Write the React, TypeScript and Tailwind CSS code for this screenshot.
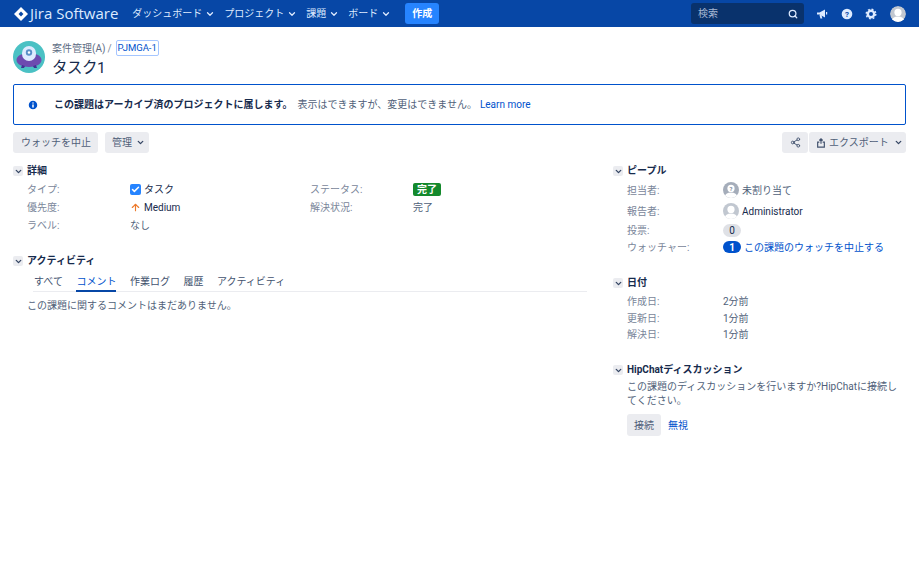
import { ChevronDown, Search, Share2, ArrowUp, Check, Info } from "lucide-react";
import type { ReactNode } from "react";

const navItems = ["ダッシュボード", "プロジェクト", "課題", "ボード"];
const tabs = ["すべて", "コメント", "作業ログ", "履歴", "アクティビティ"];

function Logo() {
  return (
    <svg viewBox="0 0 16 16" className="size-[14px] shrink-0">
      <path d="M8 0 L16 8 L8 16 L0 8 Z" fill="#fff" />
      <path d="M8 5.2 L10.8 8 L8 10.8 L5.2 8 Z" fill="#0747a6" />
    </svg>
  );
}

function ProjectAvatar() {
  return (
    <svg viewBox="0 0 32 32" className="size-[32px] shrink-0">
      <circle cx="16" cy="16" r="16" fill="#4bc1c4" />
      <path d="M3.5 19c0-4 5-7 12.5-7s12.5 3 12.5 7c0 4-5 7-12.5 7S3.5 23 3.5 19z" fill="#6d4bb0" />
      <path d="M9 24l-1 3h3l1-2zM23 24l1 3h-3l-1-2z" fill="#403294" />
      <rect x="9" y="5" width="14" height="15" rx="7" fill="#deebff" />
      <circle cx="16" cy="11.5" r="3.2" fill="#5a8fc8" />
      <circle cx="16" cy="11.5" r="1.2" fill="#fff" />
    </svg>
  );
}

function UserIcon({ unknown, id }: { unknown?: boolean; id: string }) {
  return (
    <svg viewBox="0 0 16 16" className="size-[16px] shrink-0">
      <defs>
        <clipPath id={id}>
          <circle cx="8" cy="8" r="8" />
        </clipPath>
      </defs>
      <g clipPath={`url(#${id})`}>
        <rect width="16" height="16" fill={unknown ? "#a5adba" : "#c1c7d0"} />
        <circle cx="8" cy="6.4" r="3.6" fill="#fff" />
        <ellipse cx="8" cy="15" rx="6.4" ry="4.6" fill="#fff" />
      </g>
      {unknown && (
        <text x="8" y="8.8" textAnchor="middle" fontSize="6" fontWeight="700" fill="#7a869a">
          ?
        </text>
      )}
    </svg>
  );
}

function SectionHead({ title }: { title: string }) {
  return (
    <div className="flex h-[14px] items-center gap-[4px]">
      <span className="flex h-[10px] w-[10px] items-center justify-center rounded-[2px] bg-[#ebecf0]">
        <ChevronDown className="size-[9px] text-[#344563]" strokeWidth={3.5} />
      </span>
      <h2 className="text-[10px] font-bold leading-[14px] text-[#172b4d]">{title}</h2>
    </div>
  );
}

function Field({ label, children, width = "w-[96px]", className = "h-[18px]" }: { label: string; children: ReactNode; width?: string; className?: string }) {
  return (
    <div className={`flex items-center ${className}`}>
      <span className={`${width} shrink-0 text-[#7a869a]`}>{label}</span>
      <div className="flex items-center text-[#172b4d]">{children}</div>
    </div>
  );
}

function GreyButton({ children, className = "" }: { children: ReactNode; className?: string }) {
  return (
    <button className={`flex h-[21px] items-center rounded-[3px] bg-[#ebecf0] text-[10px] text-[#505f79] ${className}`}>
      {children}
    </button>
  );
}

export default function App() {
  return (
    <div className="min-h-[562px] w-[919px] bg-white text-[10px] font-['Roboto','Noto_Sans_CJK_JP',sans-serif] text-[#172b4d]">
      <header className="flex h-[27px] items-center bg-[#0747a6] pl-[14px] pr-[13px] text-[#deebff]">
        <Logo />
        <span className="ml-[2px] font-['Open_Sans',sans-serif] text-[15px] leading-none text-[#deebff]">Jira Software</span>
        <nav className="ml-[14px] flex items-center gap-[9px]">
          {navItems.map((item) => (
            <span key={item} className="flex items-center gap-[3px]">
              {item}
              <ChevronDown className="size-[10px]" strokeWidth={3} />
            </span>
          ))}
        </nav>
        <button className="ml-[14px] h-[21px] w-[34px] rounded-[3px] bg-[#2684ff] text-[10px] font-bold text-white">作成</button>
        <div className="ml-auto flex h-[21px] w-[113px] items-center justify-between rounded-[3px] bg-[#09326c] pl-[7px] pr-[6px] text-[#a5b7d3]">
          <span>検索</span>
          <Search className="size-[10px] text-[#deebff]" strokeWidth={3} />
        </div>
        <svg viewBox="0 0 12 12" className="ml-[12px] size-[12px] text-[#deebff]" fill="currentColor">
          <path d="M1 4.5h2.5L9 1.5v8L3.5 6.5H1z" />
          <path d="M3.5 7h2l.8 3.5H4.4z" />
          <path d="M10 4h1.2v2.5H10z" />
        </svg>
        <svg viewBox="0 0 12 12" className="ml-[13px] size-[12px]">
          <circle cx="6" cy="6" r="5.3" fill="#deebff" />
          <text x="6" y="8.8" textAnchor="middle" fontSize="8" fontWeight="700" fill="#0747a6">?</text>
        </svg>
        <svg viewBox="0 0 12 12" className="ml-[12px] size-[12px]" fill="none" stroke="#deebff">
          <circle cx="6" cy="6" r="3.2" strokeWidth="2.4" />
          <circle cx="6" cy="6" r="4.8" strokeWidth="1.4" strokeDasharray="1.9 1.87" />
        </svg>
        <span className="ml-[13px] flex size-[16px] items-center justify-center overflow-hidden rounded-full">
          <UserIcon id="head-user" />
        </span>
      </header>

      <main className="px-[13px] pt-[14px]">
        <div className="flex h-[32px] items-start gap-[7px]">
          <ProjectAvatar />
          <div>
            <div className="flex h-[14px] items-center text-[#5e6c84]">
              <span>案件管理(A)</span>
              <span className="ml-[2px] mr-[5px] text-[#7a869a]">/</span>
              <span className="rounded-[1px] px-[1px] text-[9.5px] text-[#0052cc] outline-[1.5px] outline-[#a5c6ff]">PJMGA-1</span>
            </div>
            <h1 className="mt-[3px] text-[15.5px] leading-[20px] tracking-[-0.5px] text-[#172b4d]">タスク1</h1>
          </div>
        </div>

        <div className="mt-[11px] flex h-[41px] items-center rounded-[2px] border border-[#0052cc] pl-[13px]">
          <Info className="size-[12px] text-white" fill="#0052cc" strokeWidth={3} />
          <strong className="ml-[15px] font-bold text-[#172b4d]">この課題はアーカイブ済のプロジェクトに属します。</strong>
          <span className="ml-[5px] text-[#505f79]">表示はできますが、変更はできません。</span>
          <a className="ml-[3px] text-[#0052cc]">Learn more</a>
        </div>

        <div className="mt-[7px] flex items-center justify-between">
          <div className="flex gap-[7px]">
            <GreyButton className="pl-[8px] pr-[7px]">ウォッチを中止</GreyButton>
            <GreyButton className="gap-[4px] pl-[7px] pr-[4px]">
              管理
              <ChevronDown className="size-[9px] text-[#344563]" strokeWidth={3.5} />
            </GreyButton>
          </div>
          <div className="flex gap-[1px]">
            <GreyButton className="w-[26px] justify-center">
              <Share2 className="size-[11px] text-[#42526e]" strokeWidth={2} />
            </GreyButton>
            <GreyButton className="w-[97px] gap-[3px] pl-[7px]">
              <svg viewBox="0 0 12 12" className="size-[10px] text-[#42526e]" fill="none" stroke="currentColor" strokeWidth="1.4">
                <path d="M6 7V1M4 3l2-2 2 2" />
                <path d="M4 5H2v6h8V5H8" />
              </svg>
              エクスポート
              <ChevronDown className="ml-[2px] size-[9px] text-[#344563]" strokeWidth={3.5} />
            </GreyButton>
          </div>
        </div>

        <div className="mt-[11px] flex">
          <div className="w-[600px] shrink-0">
            <section>
              <SectionHead title="詳細" />
              <div className="mt-[2px] flex pl-[14px]">
                <div className="w-[283px]">
                  <Field label="タイプ:" width="w-[103px]">
                    <span className="mr-[3px] flex size-[11px] items-center justify-center rounded-[2px] bg-[#2684ff]">
                      <Check className="size-[9px] text-white" strokeWidth={4} />
                    </span>
                    タスク
                  </Field>
                  <Field label="優先度:" width="w-[103px]">
                    <ArrowUp className="mr-[3px] size-[11px] text-[#ed7a2c]" strokeWidth={2.5} />
                    Medium
                  </Field>
                  <Field label="ラベル:" width="w-[103px]">
                    <span className="text-[#505f79]">なし</span>
                  </Field>
                </div>
                <div>
                  <Field label="ステータス:" width="w-[103px]">
                    <span className="flex h-[13px] w-[28px] items-center justify-center rounded-[2px] bg-[#14892c] font-bold text-white">完了</span>
                  </Field>
                  <Field label="解決状況:" width="w-[103px]">
                    <span className="text-[#505f79]">完了</span>
                  </Field>
                </div>
              </div>
            </section>

            <section className="mt-[20px]">
              <SectionHead title="アクティビティ" />
              <div className="ml-[20px] mr-[26px] mt-[6px] flex h-[18px] gap-[13.5px] border-b border-[#ebecf0] pl-[1px] text-[#42526e]">
                {tabs.map((tab) => (
                  <span key={tab} className={tab === "コメント" ? "h-[18px] border-b-2 border-[#0747a6] text-[#0052cc]" : ""}>
                    {tab}
                  </span>
                ))}
              </div>
              <p className="ml-[14px] mt-[6px] text-[#505f79]">この課題に関するコメントはまだありません。</p>
            </section>
          </div>

          <aside className="flex-1">
            <section>
              <SectionHead title="ピープル" />
              <div className="mt-[1px] pl-[14px]">
                <Field label="担当者:" className="h-[22px]">
                  <span className="mr-[3px]"><UserIcon unknown id="assignee" /></span>
                  <span className="text-[#505f79]">未割り当て</span>
                </Field>
                <Field label="報告者:" className="h-[20px]">
                  <span className="mr-[3px]"><UserIcon id="reporter" /></span>
                  <span>Administrator</span>
                </Field>
                <Field label="投票:" className="h-[18px]">
                  <span className="flex h-[13px] w-[18px] items-center justify-center rounded-full bg-[#dfe1e6]">0</span>
                </Field>
                <Field label="ウォッチャー:" className="h-[16px]">
                  <span className="mr-[3px] flex h-[12px] w-[18px] items-center justify-center rounded-full bg-[#0052cc] font-bold text-white">1</span>
                  <a className="text-[#0052cc]">この課題のウォッチを中止する</a>
                </Field>
              </div>
            </section>

            <section className="mt-[21px]">
              <SectionHead title="日付" />
              <div className="mt-[3px] pl-[14px]">
                <Field label="作成日:" className="h-[17px]"><span className="text-[#505f79]">2分前</span></Field>
                <Field label="更新日:" className="h-[16px]"><span className="text-[#505f79]">1分前</span></Field>
                <Field label="解決日:" className="h-[17px]"><span className="text-[#505f79]">1分前</span></Field>
              </div>
            </section>

            <section className="mt-[20px]">
              <SectionHead title="HipChatディスカッション" />
              <div className="mt-[3px] pl-[14px]">
                <p className="w-[275px] leading-[14px] text-[#505f79]">この課題のディスカッションを行いますか?HipChatに接続してください。</p>
                <div className="mt-[6px] flex items-center gap-[7px]">
                  <GreyButton className="h-[22px] w-[34px] justify-center">接続</GreyButton>
                  <a className="text-[#0052cc]">無視</a>
                </div>
              </div>
            </section>
          </aside>
        </div>
      </main>
    </div>
  );
}
